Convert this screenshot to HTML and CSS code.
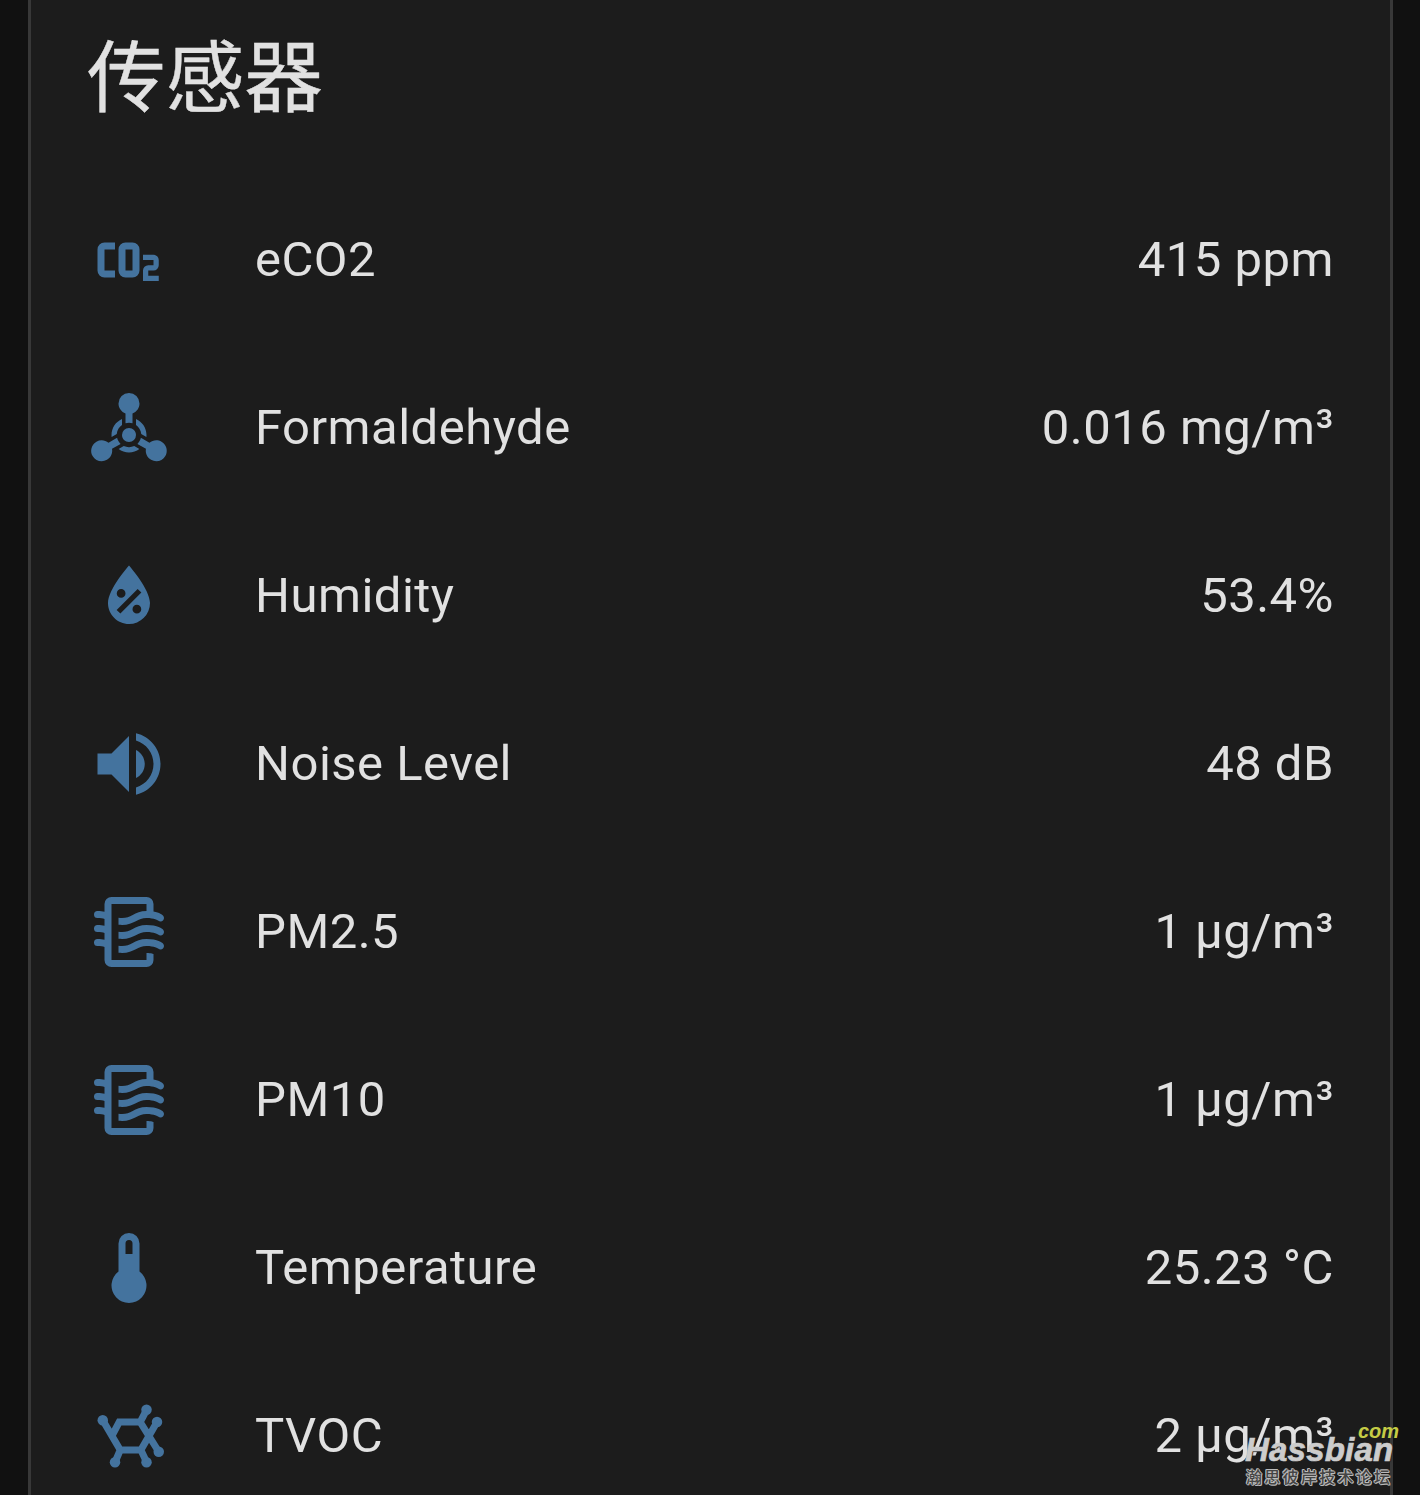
FILE: index.html
```
<!DOCTYPE html>
<html lang="zh-CN">
<head>
<meta charset="utf-8">
<title>传感器</title>
<link rel="stylesheet" href="styles.css">
</head>
<body>
<svg class="defs" width="0" height="0" aria-hidden="true">
<symbol id="filter" viewBox="0 0 24 24"><path d="M19,18.31V20A2,2 0 0,1 17,22H7A2,2 0 0,1 5,20V16.3C4.54,16.12 3.95,16 3,16A1,1 0 0,1 2,15A1,1 0 0,1 3,14C3.82,14 4.47,14.08 5,14.21V12.3C4.54,12.12 3.95,12 3,12A1,1 0 0,1 2,11A1,1 0 0,1 3,10C3.82,10 4.47,10.08 5,10.21V8.3C4.54,8.12 3.95,8 3,8A1,1 0 0,1 2,7A1,1 0 0,1 3,6C3.82,6 4.47,6.08 5,6.21V4A2,2 0 0,1 7,2H17A2,2 0 0,1 19,4V6.16C20.78,6.47 21.54,7.13 21.71,7.29C22.1,7.68 22.1,8.32 21.71,8.71C21.32,9.1 20.8,9.09 20.29,8.71V8.71C20.29,8.71 19.25,8 17,8C15.74,8 14.91,8.41 13.95,8.9C12.91,9.41 11.74,10 10,10C9.64,10 9.31,10 9,9.96V7.95C9.3,8 9.63,8 10,8C11.26,8 12.09,7.59 13.05,7.11C14.09,6.59 15.27,6 17,6V4H7V20H17V18C18.5,18 18.97,18.29 19,18.31M17,10C15.27,10 14.09,10.59 13.05,11.11C12.09,11.59 11.26,12 10,12C9.63,12 9.3,12 9,11.95V13.96C9.31,14 9.64,14 10,14C11.74,14 12.91,13.41 13.95,12.9C14.91,12.42 15.74,12 17,12C19.25,12 20.29,12.71 20.29,12.71C20.8,13.1 21.32,13.1 21.71,12.71C22.1,12.32 22.1,11.69 21.71,11.29C21.5,11.08 20.25,10 17,10M17,14C15.27,14 14.09,14.59 13.05,15.11C12.09,15.59 11.26,16 10,16C9.63,16 9.3,16 9,15.95V17.96C9.31,18 9.64,18 10,18C11.74,18 12.91,17.41 13.95,16.9C14.91,16.42 15.74,16 17,16C19.25,16 20.29,16.71 20.29,16.71C20.8,17.1 21.32,17.1 21.71,16.71C22.1,16.32 22.1,15.69 21.71,15.29C21.5,15.08 20.25,14 17,14Z"/></symbol>
</svg>
<main class="card">
<h1 class="title">传感器</h1>
<ul class="list">
<li class="row"><svg class="icon" viewBox="0 0 24 24"><path d="M5,7A2,2 0 0,0 3,9V15A2,2 0 0,0 5,17H8V15H5V9H8V7H5M11,7A2,2 0 0,0 9,9V15A2,2 0 0,0 11,17H13A2,2 0 0,0 15,15V9A2,2 0 0,0 13,7H11M11,9H13V15H11V9M16,10.5V12H19V13.5H17.5A1.5,1.5 0 0,0 16,15V18H20.5V16.5H17.5V15H19A1.5,1.5 0 0,0 20.5,13.5V12A1.5,1.5 0 0,0 19,10.5H16Z"/></svg><span class="name">eCO2</span><span class="value">415 ppm</span></li>
<li class="row"><svg class="icon" viewBox="0 0 24 24"><path d="M11,7.83C9.83,7.42 9,6.3 9,5A3,3 0 0,1 12,2A3,3 0 0,1 15,5C15,6.31 14.16,7.42 13,7.83V10.64C12.68,10.55 12.35,10.5 12,10.5C11.65,10.5 11.32,10.55 11,10.64V7.83M18.3,21.1C17.16,20.45 16.62,19.18 16.84,17.96L14.4,16.55C14.88,16.09 15.24,15.5 15.4,14.82L17.84,16.23C18.78,15.42 20.16,15.26 21.29,15.91C22.73,16.74 23.22,18.57 22.39,20C21.56,21.44 19.73,21.93 18.3,21.1M2.7,15.9C3.83,15.25 5.21,15.42 6.15,16.22L8.6,14.81C8.76,15.5 9.11,16.08 9.6,16.54L7.15,17.95C7.38,19.17 6.83,20.45 5.7,21.1C4.26,21.93 2.43,21.44 1.6,20C0.77,18.57 1.26,16.73 2.7,15.9M14,14A2,2 0 0,1 12,16C10.89,16 10,15.1 10,14A2,2 0 0,1 12,12C13.11,12 14,12.9 14,14M17,14L16.97,14.57L15.5,13.71C15.4,12.64 14.83,11.71 14,11.12V9.41C15.77,10.19 17,11.95 17,14M14.97,18.03C14.14,18.64 13.11,19 12,19C10.89,19 9.86,18.64 9.03,18L10.5,17.17C10.96,17.38 11.47,17.5 12,17.5C12.53,17.5 13.03,17.38 13.5,17.17L14.97,18.03M7.03,14.56L7,14C7,11.95 8.23,10.19 10,9.42V11.13C9.17,11.71 8.6,12.64 8.5,13.71L7.03,14.56Z"/></svg><span class="name">Formaldehyde</span><span class="value">0.016 mg/m³</span></li>
<li class="row"><svg class="icon" viewBox="0 0 24 24"><path d="M12,3.25C12,3.25 6,10 6,14C6,17.32 8.69,20 12,20A6,6 0 0,0 18,14C18,10 12,3.25 12,3.25M14.47,9.97L15.53,11.03L9.53,17.03L8.47,15.97M9.75,10A1.25,1.25 0 0,1 11,11.25A1.25,1.25 0 0,1 9.75,12.5A1.25,1.25 0 0,1 8.5,11.25A1.25,1.25 0 0,1 9.75,10M14.25,14.5A1.25,1.25 0 0,1 15.5,15.75A1.25,1.25 0 0,1 14.25,17A1.25,1.25 0 0,1 13,15.75A1.25,1.25 0 0,1 14.25,14.5Z"/></svg><span class="name">Humidity</span><span class="value">53.4%</span></li>
<li class="row"><svg class="icon" viewBox="0 0 24 24"><path d="M14,3.23V5.29C16.89,6.15 19,8.83 19,12C19,15.17 16.89,17.84 14,18.7V20.77C18,19.86 21,16.28 21,12C21,7.72 18,4.14 14,3.23M16.5,12C16.5,10.23 15.5,8.71 14,7.97V16C15.5,15.29 16.5,13.76 16.5,12M3,9V15H7L12,20V4L7,9H3Z"/></svg><span class="name">Noise Level</span><span class="value">48 dB</span></li>
<li class="row"><svg class="icon"><use href="#filter"/></svg><span class="name">PM2.5</span><span class="value">1 µg/m³</span></li>
<li class="row"><svg class="icon"><use href="#filter"/></svg><span class="name">PM10</span><span class="value">1 µg/m³</span></li>
<li class="row"><svg class="icon" viewBox="0 0 24 24"><path d="M15 13V5A3 3 0 0 0 9 5V13A5 5 0 1 0 15 13M12 4A1 1 0 0 1 13 5V8H11V5A1 1 0 0 1 12 4Z"/></svg><span class="name">Temperature</span><span class="value">25.23 °C</span></li>
<li class="row"><svg class="icon" viewBox="0 0 24 24"><g class="bonds"><path d="M4.5 7.5L9.5 16H15.4L20 8M17.05 4.5L15.2 8L20.5 16.5M15.4 8H9.2L7.1 12M9.5 16L8 19.5M15.4 16L17.05 19.5"/></g><circle cx="4.5" cy="7.5" r="1.5"/><circle cx="17" cy="4.5" r="1.5"/><circle cx="20" cy="8" r="1.5"/><circle cx="20.5" cy="16.5" r="1.5"/><circle cx="17" cy="19.5" r="1.5"/><circle cx="8" cy="19.5" r="1.5"/></svg><span class="name">TVOC</span><span class="value">2 µg/m³</span></li>
</ul>
</main>
<div class="watermark"><span class="wm-com">com</span><span class="wm-name">Hassbian</span><span class="wm-sub">瀚思彼岸技术论坛</span></div>
</body>
</html>
```
FILE: styles.css
```
* { box-sizing: border-box; }
body {
  margin: 0;
  height: 1495px;
  position: relative;
  overflow: hidden;
  background: #111;
  color: #e1e1e1;
  font-family: Roboto, "Noto Sans CJK SC", sans-serif;
}
.defs { display: block; }
.card {
  width: 1365px;
  height: 1495px;
  margin-left: 28px;
  padding: 21px 56px 0 56px;
  border: solid #383838;
  border-width: 0 3px;
  background: #1c1c1c;
  overflow: hidden;
}
.title {
  margin: 0;
  height: 155px;
  font-size: 78.7px;
  line-height: 116px;
  font-weight: 400;
  -webkit-text-stroke: 0.4px #e1e1e1;
}
.list { margin: 0; padding: 0; list-style: none; }
.row { display: flex; align-items: center; height: 168px; }
.icon { flex: none; width: 84px; height: 84px; fill: #44739e; }
.bonds { fill: none; stroke: #44739e; stroke-width: 2; }
.name, .value { font-size: 49px; line-height: 70px; letter-spacing: 0.01em; white-space: nowrap; }
.name { flex: 1; margin-left: 84px; }
.watermark {
  position: absolute;
  left: 1245px;
  top: 1421px;
  width: 160px;
  display: flex;
  flex-direction: column;
  font-family: "Liberation Sans", "Noto Sans CJK SC", sans-serif;
  white-space: nowrap;
}
.wm-com { margin-left: 113px; height: 11px; font: italic bold 20px/20px "Liberation Sans", sans-serif; color: #c5cc45; }
.wm-name { height: 36px; font-size: 33px; line-height: 35px; letter-spacing: 0.2px; font-style: italic; font-weight: bold; color: #ccc; -webkit-text-stroke: 0.7px #ccc; text-shadow: 1px 1px 1px #222; }
.wm-sub { margin-left: 1px; font-size: 16px; line-height: 20px; letter-spacing: 2.3px; font-weight: 500; color: #444; text-shadow: 1px 0 #bbb, -1px 0 #bbb, 0 1px #bbb, 0 -1px #bbb, 1px 1px #aaa, -1px -1px #aaa; }
```
